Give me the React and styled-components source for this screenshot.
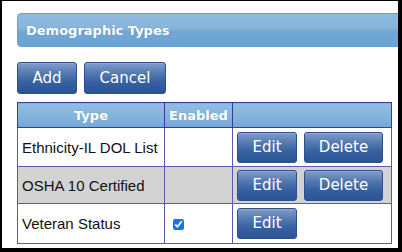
import React from "react";
import styled, { createGlobalStyle } from "styled-components";

const Global = createGlobalStyle`
  html, body { margin: 0; padding: 0; background: #ffffff; }
  body { font-family: "Liberation Sans", Arial, sans-serif; }
`;

const Frame = styled.div`
  box-sizing: border-box;
  width: 402px;
  height: 252px;
  border-style: solid;
  border-color: #000;
  border-width: 1px 4px 4px 2px;
  background: #fff;
  overflow: hidden;
  padding: 12px 0 0 15px;
`;

const TitleBar = styled.div`
  box-sizing: border-box;
  height: 34px;
  margin-right: -6px;
  border-radius: 4px 0 0 4px;
  border: 1px solid #6a9fcf;
  background: linear-gradient(to bottom, #8fbbdf 0%, #87b5db 45%, #72a7d5 55%, #6ca3d2 100%);
  display: flex;
  align-items: center;
  padding-left: 8px;
  font-family: "DejaVu Sans", Verdana, sans-serif;
  font-weight: bold;
  font-size: 13px;
  color: #fff;
  text-shadow: 0 0 1px rgba(60, 100, 150, 0.5);
`;

const Toolbar = styled.div`
  display: flex;
  gap: 7px;
  margin-top: 15px;
`;

const Btn = styled.button`
  box-sizing: border-box;
  height: ${(p) => (p.$small ? 31 : 32)}px;
  width: ${(p) => p.$w}px;
  padding: 0;
  border: 1px solid #2d508b;
  border-radius: 3px;
  background: linear-gradient(to bottom, #7f9dca 0%, #5479b0 35%, #36609f 65%, #2b5493 100%);
  color: #fff;
  font-family: "DejaVu Sans", Verdana, sans-serif;
  font-size: 15px;
  line-height: 1;
  cursor: pointer;
  box-shadow: inset 0 1px 0 rgba(255, 255, 255, 0.15);
`;

const Table = styled.table`
  margin-top: 8px;
  border-collapse: collapse;
  table-layout: fixed;
  width: 375px;
`;

const Th = styled.th`
  height: 24px;
  padding: 0;
  border: 1px solid #3b3b9e;
  background: linear-gradient(to bottom, #90bde1 0%, #86b5dc 50%, #72a8d6 100%);
  color: #fff;
  font-family: "DejaVu Sans", Verdana, sans-serif;
  font-weight: bold;
  font-size: 13px;
  text-align: center;
  text-shadow: 0 0 1px rgba(60, 100, 150, 0.4);
`;

const Tr = styled.tr`
  background: ${(p) => (p.$alt ? "#d3d3d3" : "#ffffff")};
`;

const Td = styled.td`
  height: ${(p) => p.$h}px;
  padding: 0 4px;
  border: 1px solid #5a5aae;
  font-size: 15px;
  color: #111;
  vertical-align: middle;
  box-sizing: border-box;
`;

const CheckCell = styled(Td)`
  padding-left: 6px;
`;

const Actions = styled.div`
  display: flex;
  gap: 7px;
  align-items: center;
`;

const Check = styled.input`
  display: block;
  width: 11px;
  height: 11px;
  margin: 2px 0 0 2px;
  accent-color: #1a73e8;
`;

const rows = [
  { type: "Ethnicity-IL DOL List", enabled: false, del: true, h: 39 },
  { type: "OSHA 10 Certified", enabled: false, del: true, h: 37, alt: true },
  { type: "Veteran Status", enabled: true, del: false, h: 40 },
];

export default function App() {
  return (
    <>
      <Global />
      <Frame>
        <TitleBar>Demographic Types</TitleBar>
        <Toolbar>
          <Btn $w={60}>Add</Btn>
          <Btn $w={82}>Cancel</Btn>
        </Toolbar>
        <Table>
          <colgroup>
            <col style={{ width: 147 }} />
            <col style={{ width: 68 }} />
            <col style={{ width: 159 }} />
          </colgroup>
          <thead>
            <tr>
              <Th>Type</Th>
              <Th>Enabled</Th>
              <Th></Th>
            </tr>
          </thead>
          <tbody>
            {rows.map((r) => (
              <Tr key={r.type} $alt={r.alt}>
                <Td $h={r.h}>{r.type}</Td>
                <CheckCell $h={r.h}>
                  {r.enabled && <Check type="checkbox" defaultChecked />}
                </CheckCell>
                <Td $h={r.h}>
                  <Actions>
                    <Btn $w={60} $small>Edit</Btn>
                    {r.del && <Btn $w={79} $small>Delete</Btn>}
                  </Actions>
                </Td>
              </Tr>
            ))}
          </tbody>
        </Table>
      </Frame>
    </>
  );
}
